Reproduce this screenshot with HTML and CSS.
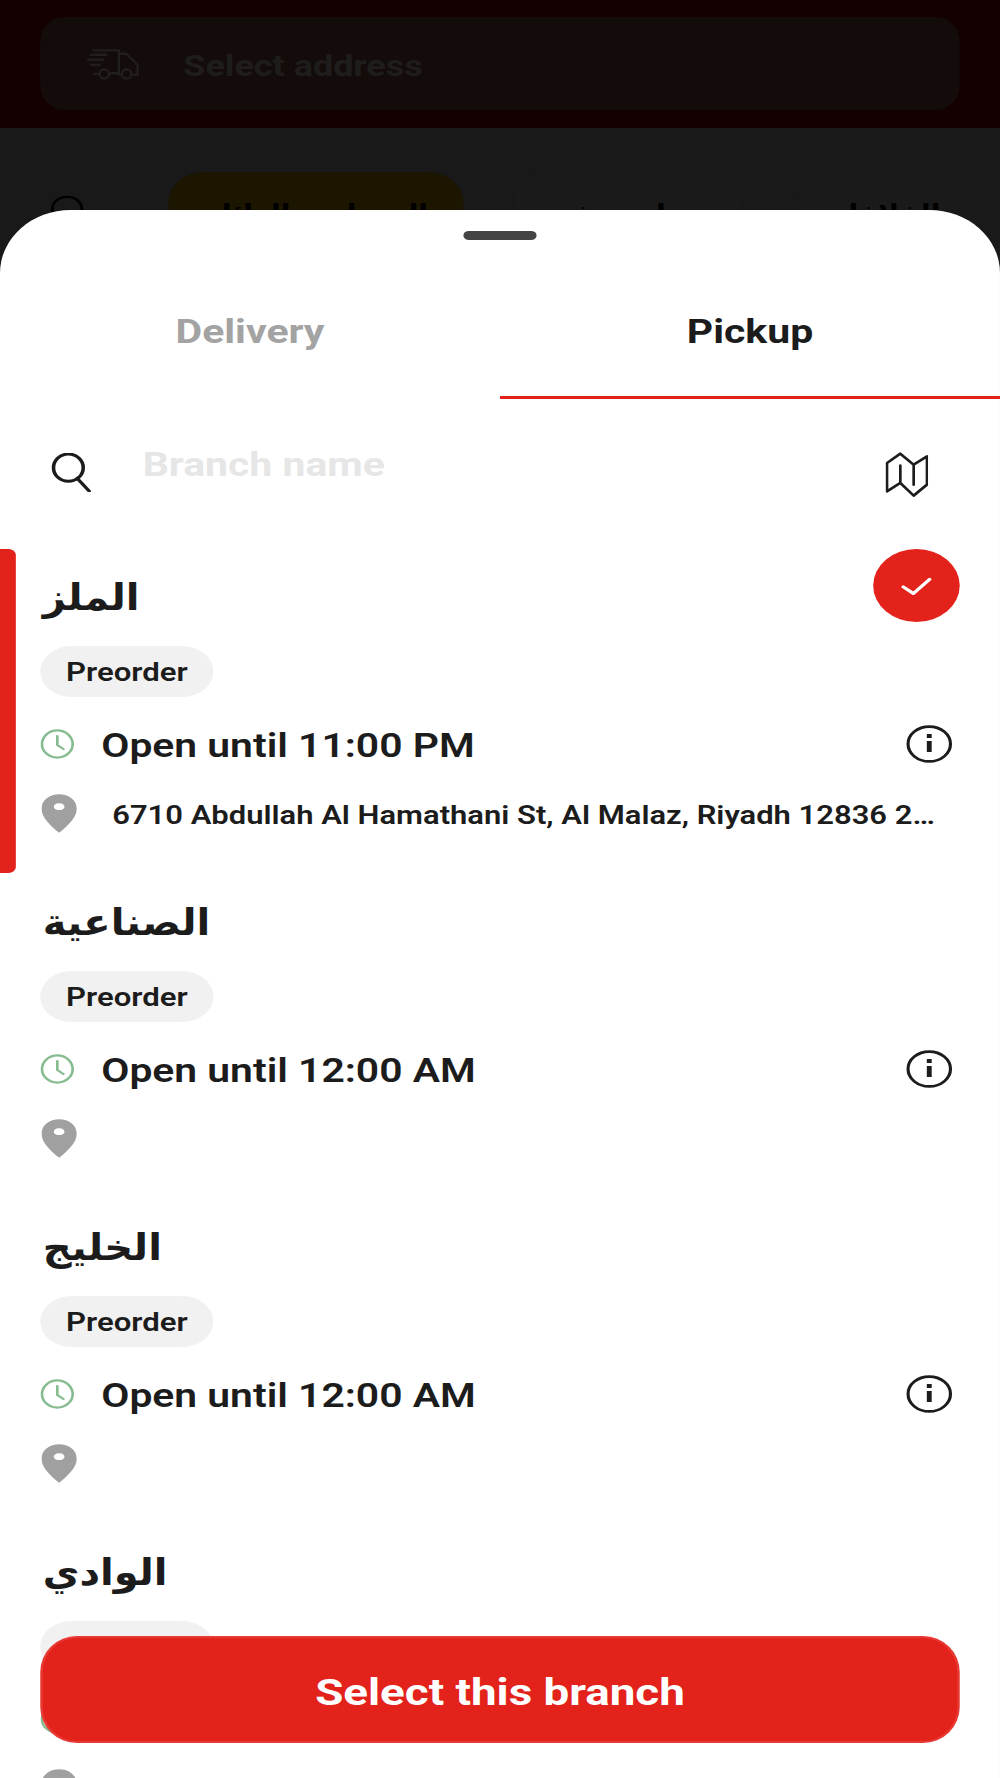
FILE: index.html
```html
<!DOCTYPE html>
<html lang="en">
<head>
<meta charset="utf-8">
<title>Select branch</title>
<link rel="stylesheet" href="styles.css">
</head>
<body>
<div class="screen">
  <header class="top">
    <div class="address-card">
      <svg class="truck" viewBox="165 55 162 98" preserveAspectRatio="none" fill="none" stroke="#211e1d" stroke-width="7" stroke-linecap="round" stroke-linejoin="round"><path d="M185 62H262V130H236M262 72H285L318 105V135H302M200 132H186M170 90H215M178 105H205M178 75H225M262 133H268"/><circle cx="218" cy="132" r="14"/><circle cx="285" cy="132" r="14"/></svg>
      <span class="address-text">Select address</span>
    </div>
  </header>
  <div class="pills">
    <svg class="bg-search" viewBox="0 0 30 30" fill="none" stroke="#000" stroke-width="2.5"><circle cx="15" cy="15" r="13"/></svg>
    <div class="pill pill-yellow" dir="rtl">الوجبات والعائلة</div>
    <div class="pill pill-b" dir="rtl">ساندوتش</div>
    <div class="pill pill-c" dir="rtl">الفلافل</div>
  </div>

  <section class="sheet">
    <div class="handle"></div>
    <nav class="tabs">
      <div class="tab">Delivery</div>
      <div class="tab tab-active">Pickup</div>
    </nav>
    <div class="search">
      <svg class="search-icon" viewBox="0 0 34 40" fill="none" stroke="#1c1c1c" stroke-width="3" stroke-linecap="round"><ellipse cx="14.5" cy="15" rx="12.5" ry="14"/><path d="M22 26l10 13"/></svg>
      <span class="placeholder">Branch name</span>
      <svg class="map-icon" viewBox="75 37 130 136" preserveAspectRatio="none" fill="none" stroke="#1c1c1c" stroke-width="8" stroke-linejoin="round" stroke-linecap="round"><path d="M80 155V70L120 42L160 75L200 50V135L160 168L120 130ZM120 78V130M160 75V135"/></svg>
    </div>

    <div class="list">
      <article class="branch selected">
        <span class="bar"></span>
        <div class="check"><svg viewBox="0 0 30 24" fill="none" stroke="#fff" stroke-width="3.6" stroke-linecap="round" stroke-linejoin="round"><path d="M2 13l10 8L28 4"/></svg></div>
        <h2 class="name" dir="rtl">الملز</h2>
        <div class="badge">Preorder</div>
        <div class="row">
          <svg class="clock" viewBox="0 0 28 30" fill="none" stroke="#86bc8f" stroke-width="2.2" stroke-linecap="round" stroke-linejoin="round"><ellipse cx="14" cy="15" rx="12.6" ry="13.6"/><path d="M14 7v9l5 4"/></svg>
          <span class="hours">Open until 11:00 PM</span>
          <svg class="info" viewBox="0 0 38 38" fill="none" stroke="#1c1c1c" stroke-width="2.6"><circle cx="19" cy="19" r="17.4"/><path d="M19 16v11" stroke-width="4"/><path d="M19 9v4" stroke-width="4"/></svg>
        </div>
        <div class="row addr-row">
          <svg class="pin" viewBox="0 0 30 40"><path fill="#a0a0a0" fill-rule="evenodd" d="M15 0c8 0 15 6 15 15 0 9-8 18-15 25C8 33 0 24 0 15 0 6 7 0 15 0zm0 9.500c-2.500 0-4.500 1.500-4.500 3.500s2 3.500 4.500 3.500 4.500-1.500 4.500-3.500-2-3.500-4.500-3.500z"/></svg>
          <span class="addr">6710 Abdullah Al Hamathani St, Al Malaz, Riyadh 12836 2987, Saudi Arabia</span>
        </div>
      </article>
      <article class="branch">
        <h2 class="name" dir="rtl">الصناعية</h2>
        <div class="badge">Preorder</div>
        <div class="row">
          <svg class="clock" viewBox="0 0 28 30" fill="none" stroke="#86bc8f" stroke-width="2.2" stroke-linecap="round" stroke-linejoin="round"><ellipse cx="14" cy="15" rx="12.6" ry="13.6"/><path d="M14 7v9l5 4"/></svg>
          <span class="hours">Open until 12:00 AM</span>
          <svg class="info" viewBox="0 0 38 38" fill="none" stroke="#1c1c1c" stroke-width="2.6"><circle cx="19" cy="19" r="17.4"/><path d="M19 16v11" stroke-width="4"/><path d="M19 9v4" stroke-width="4"/></svg>
        </div>
        <div class="row addr-row">
          <svg class="pin" viewBox="0 0 30 40"><path fill="#a0a0a0" fill-rule="evenodd" d="M15 0c8 0 15 6 15 15 0 9-8 18-15 25C8 33 0 24 0 15 0 6 7 0 15 0zm0 9.500c-2.500 0-4.500 1.500-4.500 3.500s2 3.500 4.500 3.500 4.500-1.500 4.500-3.500-2-3.500-4.500-3.500z"/></svg>
        </div>
      </article>
      <article class="branch">
        <h2 class="name" dir="rtl">الخليج</h2>
        <div class="badge">Preorder</div>
        <div class="row">
          <svg class="clock" viewBox="0 0 28 30" fill="none" stroke="#86bc8f" stroke-width="2.2" stroke-linecap="round" stroke-linejoin="round"><ellipse cx="14" cy="15" rx="12.6" ry="13.6"/><path d="M14 7v9l5 4"/></svg>
          <span class="hours">Open until 12:00 AM</span>
          <svg class="info" viewBox="0 0 38 38" fill="none" stroke="#1c1c1c" stroke-width="2.6"><circle cx="19" cy="19" r="17.4"/><path d="M19 16v11" stroke-width="4"/><path d="M19 9v4" stroke-width="4"/></svg>
        </div>
        <div class="row addr-row">
          <svg class="pin" viewBox="0 0 30 40"><path fill="#a0a0a0" fill-rule="evenodd" d="M15 0c8 0 15 6 15 15 0 9-8 18-15 25C8 33 0 24 0 15 0 6 7 0 15 0zm0 9.500c-2.500 0-4.500 1.500-4.500 3.500s2 3.500 4.500 3.500 4.500-1.500 4.500-3.500-2-3.500-4.500-3.500z"/></svg>
        </div>
      </article>
      <article class="branch">
        <h2 class="name" dir="rtl">الوادي</h2>
        <div class="badge"></div>
        <div class="row">
          <svg class="clock" viewBox="0 0 28 30" fill="none" stroke="#86bc8f" stroke-width="2.2" stroke-linecap="round" stroke-linejoin="round"><ellipse cx="14" cy="15" rx="12.6" ry="13.6"/><path d="M14 7v9l5 4"/></svg>
        </div>
        <div class="row addr-row">
          <svg class="pin" viewBox="0 0 30 40"><path fill="#a0a0a0" fill-rule="evenodd" d="M15 0c8 0 15 6 15 15 0 9-8 18-15 25C8 33 0 24 0 15 0 6 7 0 15 0zm0 9.500c-2.500 0-4.500 1.500-4.500 3.500s2 3.500 4.500 3.500 4.500-1.500 4.500-3.500-2-3.500-4.500-3.500z"/></svg>
        </div>
      </article>
    </div>
    <button class="cta">Select this branch</button>
  </section>
</div>
</body>
</html>
```

FILE: styles.css
```css
/* The whole screen is laid out at 820px wide and stretched to the 1000px window,
   the same anamorphic squeeze the reference capture has. */
html, body {
  margin: 0;
  padding: 0;
  background: #fff;
  overflow: hidden;
}
body {
  width: 1000px;
  height: 1778px;
}
.screen {
  position: relative;
  width: 820px;
  height: 1778px;
  overflow: hidden;
  background: #191919;
  font-family: Roboto, "DejaVu Sans", sans-serif;
  color: #1c1c1c;
  transform: scaleX(1.2195);
  transform-origin: 0 0;
}
.top {
  height: 128px;
  background: #140000;
  padding: 17px 33px 0;
  box-sizing: border-box;
}
.address-card {
  height: 93px;
  border-radius: 20px / 24px;
  background: #130c0b;
  display: flex;
  align-items: center;
  padding-left: 38px;
  box-sizing: border-box;
}
.truck {
  width: 44.300px;
  height: 33px;
  flex: none;
  margin-top: 2px;
}
.address-text {
  margin-left: 35px;
  font-size: 29.500px;
  font-weight: 700;
  color: #1f1d1c;
  margin-top: 4px;
}
.pills {
  display: flex;
  align-items: flex-start;
  padding-top: 44px;
  height: 100px;
  box-sizing: border-box;
}
.bg-search {
  width: 28px;
  height: 34px;
  margin: 20px 0 0 41px;
  flex: none;
}
.pill {
  height: 80px;
  border-radius: 30px;
  font-family: "DejaVu Sans Condensed", "DejaVu Sans", sans-serif;
  font-size: 26px;
  font-weight: 700;
  color: #000;
  text-align: center;
  line-height: 84px;
  white-space: nowrap;
  flex: none;
}
.pill-yellow {
  width: 242px;
  margin-left: 69px;
  background: #1c1600;
}
.pill-b {
  width: 185px;
  margin-left: 42px;
  background: #1a1a1a;
}
.pill-c {
  width: 145px;
  margin-left: 48px;
  background: #1a1a1a;
}

.sheet {
  position: absolute;
  left: 0;
  right: 0;
  top: 210px;
  bottom: 0;
  background: #fff;
  border-radius: 58px 58px 0 0 / 63px 63px 0 0;
  overflow: hidden;
}
.handle {
  width: 60px;
  height: 9px;
  margin: 21px auto 0;
  border-radius: 5px;
  background: #444;
}
.tabs {
  display: flex;
  height: 158.500px;
  box-sizing: border-box;
}
.tab {
  flex: 1;
  text-align: center;
  font-size: 33.600px;
  font-weight: 700;
  color: #a3a3a3;
  line-height: 38px;
  padding-top: 73px;
  box-sizing: border-box;
}
.tab-active {
  color: #1c1c1c;
  border-bottom: 3.500px solid #e3221c;
}
.search {
  position: relative;
  height: 153px;
  display: flex;
  align-items: flex-start;
  padding: 57px 33px 0 41px;
  box-sizing: border-box;
  margin-top: -2.500px;
}
.search-icon {
  width: 35px;
  height: 39px;
  flex: none;
}
.placeholder {
  margin-left: 41px;
  margin-top: -8px;
  font-size: 33.600px;
  line-height: 40px;
  font-weight: 700;
  color: #e6e6e6;
}
.map-icon {
  width: 35.500px;
  height: 45.300px;
  flex: none;
  margin-left: auto;
  margin-right: 26px;
  margin-top: -1px;
}
.list {
  position: relative;
}
.branch {
  position: relative;
  height: 325px;
  padding: 0 33px;
  box-sizing: border-box;
}
.bar {
  position: absolute;
  left: 0;
  top: 0;
  width: 12.500px;
  height: 324px;
  background: #e3221c;
  border-radius: 0 6px 6px 0;
}
.check {
  position: absolute;
  right: 33px;
  top: 0;
  width: 71px;
  height: 73px;
  border-radius: 50%;
  background: #e3221c;
  display: flex;
  align-items: center;
  justify-content: center;
}
.check svg {
  width: 25px;
  height: 20px;
}
.name {
  margin: 0;
  padding: 24px 0 0 2px;
  height: 97px;
  box-sizing: border-box;
  font-size: 36.500px;
  line-height: 50px;
  font-weight: 700;
  font-family: "DejaVu Sans Condensed", "DejaVu Sans", sans-serif;
  text-align: right;
  direction: ltr;
  width: max-content;
}
.badge {
  width: 142px;
  height: 51px;
  border-radius: 26px;
  background: #f1f1f1;
  text-align: center;
  font-size: 25.500px;
  font-weight: 600;
  line-height: 53px;
}
.row {
  display: flex;
  align-items: center;
  margin-top: 28px;
  height: 38px;
}
.clock {
  width: 28px;
  height: 30px;
  flex: none;
}
.hours {
  margin-left: 22px;
  margin-top: 4px;
  font-size: 33.500px;
  font-weight: 600;
  line-height: 38px;
}
.info {
  width: 38px;
  height: 38px;
  flex: none;
  margin-left: auto;
  margin-right: 6px;
}
.addr-row {
  margin-top: 30px;
  height: 40px;
}
.pin {
  width: 29px;
  height: 39px;
  flex: none;
  margin-left: 1px;
}
.addr {
  margin-left: 29px;
  margin-top: 4px;
  font-size: 25.400px;
  font-weight: 600;
  width: 681px;
  white-space: nowrap;
  overflow: hidden;
  text-overflow: ellipsis;
}
.cta {
  position: absolute;
  left: 33px;
  right: 33px;
  top: 1426px;
  height: 107px;
  box-sizing: border-box;
  border: 2px solid #e83a34;
  border-radius: 30px / 36px;
  background: #e3221c;
  color: #fff;
  font-family: Roboto, sans-serif;
  font-size: 37.500px;
  font-weight: 700;
  padding: 4px 0 0;
}
```
